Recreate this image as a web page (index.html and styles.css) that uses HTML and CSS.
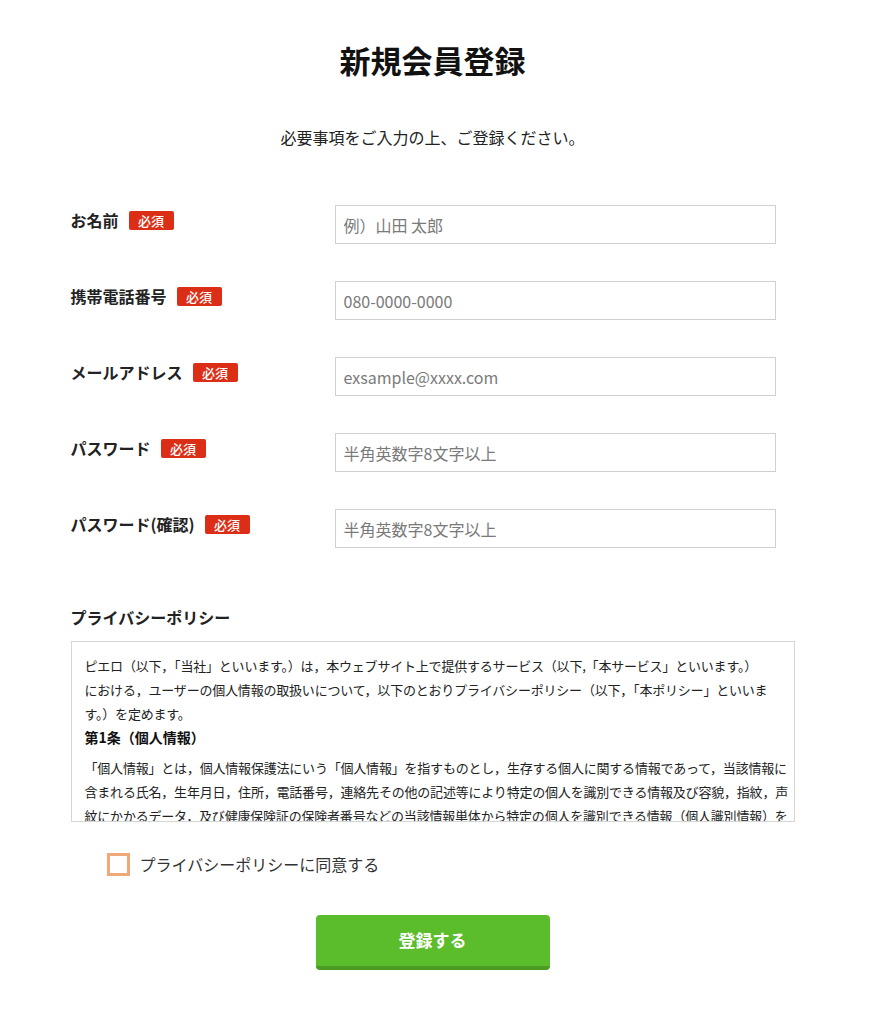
FILE: index.html
```html
<!DOCTYPE html>
<html lang="ja">
<head>
<meta charset="utf-8">
<title>新規会員登録</title>
<link rel="stylesheet" href="styles.css">
</head>
<body>
<div class="page">
  <main class="container">
    <h1 class="title">新規会員登録</h1>
    <p class="lead">必要事項をご入力の上、ご登録ください。</p>

    <form class="form">
      <div class="fields">
        <label class="label" for="name">お名前<span class="badge">必須</span></label>
        <input class="input" id="name" type="text" placeholder="例）山田 太郎">

        <label class="label" for="tel">携帯電話番号<span class="badge">必須</span></label>
        <input class="input" id="tel" type="tel" placeholder="080-0000-0000">

        <label class="label" for="mail">メールアドレス<span class="badge">必須</span></label>
        <input class="input" id="mail" type="email" placeholder="exsample@xxxx.com">

        <label class="label" for="pw">パスワード<span class="badge">必須</span></label>
        <input class="input" id="pw" type="password" placeholder="半角英数字8文字以上">

        <label class="label" for="pw2">パスワード(確認)<span class="badge">必須</span></label>
        <input class="input" id="pw2" type="password" placeholder="半角英数字8文字以上">
      </div>

      <h2 class="policy-title">プライバシーポリシー</h2>
      <div class="policy">
        <p class="policy-text">ピエロ（以下，「当社」といいます。）は，本ウェブサイト上で提供するサービス（以下,「本サービス」といいます。）<br>における，ユーザーの個人情報の取扱いについて，以下のとおりプライバシーポリシー（以下，「本ポリシー」といいま<br>す。）を定めます。</p>
        <h3 class="policy-head">第1条（個人情報）</h3>
        <p class="policy-text para">「個人情報」とは，個人情報保護法にいう「個人情報」を指すものとし，生存する個人に関する情報であって，当該情報に<br>含まれる氏名，生年月日，住所，電話番号，連絡先その他の記述等により特定の個人を識別できる情報及び容貌，指紋，声<br>紋にかかるデータ，及び健康保険証の保険者番号などの当該情報単体から特定の個人を識別できる情報（個人識別情報）を<br>指します。</p>
      </div>

      <label class="agree">
        <input class="check" type="checkbox">
        <span>プライバシーポリシーに同意する</span>
      </label>

      <div class="actions">
        <button class="submit" type="submit">登録する</button>
      </div>
    </form>
  </main>
</div>
</body>
</html>
```
FILE: styles.css
```css
* { box-sizing: border-box; }

html, body {
  margin: 0;
  padding: 0;
  background: #fff;
}

body {
  font-family: "Noto Sans CJK JP", "Noto Sans", sans-serif;
  color: #222;
}

.page {
  width: 865px;
  padding-top: 37px;
  padding-bottom: 40px;
}

.container {
  width: 724px;
  margin: 0 auto;
}

.title {
  margin: 0;
  font-size: 31px;
  line-height: 45px;
  font-weight: 700;
  text-align: center;
  color: #111;
}

.lead {
  margin: 43px 0 0;
  font-size: 16px;
  line-height: 24px;
  text-align: center;
  color: #222;
}

.form {
  margin-top: 56px;
}

.fields {
  display: grid;
  grid-template-columns: 264px 441px;
  row-gap: 37px;
}

.label {
  display: flex;
  align-items: center;
  height: 22px;
  margin-top: 4px;
  font-size: 16px;
  font-weight: 700;
  color: #222;
}

.badge {
  display: inline-flex;
  align-items: center;
  justify-content: center;
  width: 45px;
  height: 19px;
  margin-left: 10px;
  border-radius: 2px;
  background: #dc2e16;
  color: #fff;
  font-size: 13px;
  font-weight: 500;
  line-height: 1;
}

.input {
  width: 441px;
  height: 39px;
  padding: 0 8px;
  border: 1px solid #d0d0d0;
  border-radius: 0;
  font-family: inherit;
  font-size: 16px;
  color: #222;
  background: #fff;
  outline: none;
}

.input::placeholder {
  color: #7a7a7a;
}

.policy-title {
  margin: 57px 0 0;
  font-size: 16px;
  line-height: 24px;
  font-weight: 700;
  color: #222;
}

.policy {
  margin-top: 12px;
  height: 181px;
  padding: 12px 0 0 13px;
  border: 1px solid #d5d5d5;
  overflow: hidden;
}

.policy-text {
  margin: 0;
  font-size: 13px;
  line-height: 24px;
  letter-spacing: -0.2px;
  white-space: nowrap;
  color: #222;
}

.policy-head {
  margin: 0;
  font-size: 14px;
  line-height: 22px;
  font-weight: 700;
  color: #111;
}

.para {
  margin-top: 8px;
}

.agree {
  display: flex;
  align-items: center;
  gap: 10px;
  height: 24px;
  margin: 30px 0 0 36px;
  font-size: 16px;
  color: #333;
  cursor: pointer;
}

.check {
  appearance: none;
  -webkit-appearance: none;
  width: 23px;
  height: 23px;
  margin: 0;
  border: 3px solid #f0a878;
  border-radius: 0;
  background: #fff;
}

.actions {
  display: flex;
  justify-content: center;
  margin-top: 39px;
}

.submit {
  width: 234px;
  height: 55px;
  padding: 0 0 2px;
  border: none;
  border-bottom: 4px solid #4b9c22;
  border-radius: 4px;
  background: #5bbd2b;
  color: #fff;
  font-family: inherit;
  font-size: 17px;
  font-weight: 700;
  cursor: pointer;
}
```
